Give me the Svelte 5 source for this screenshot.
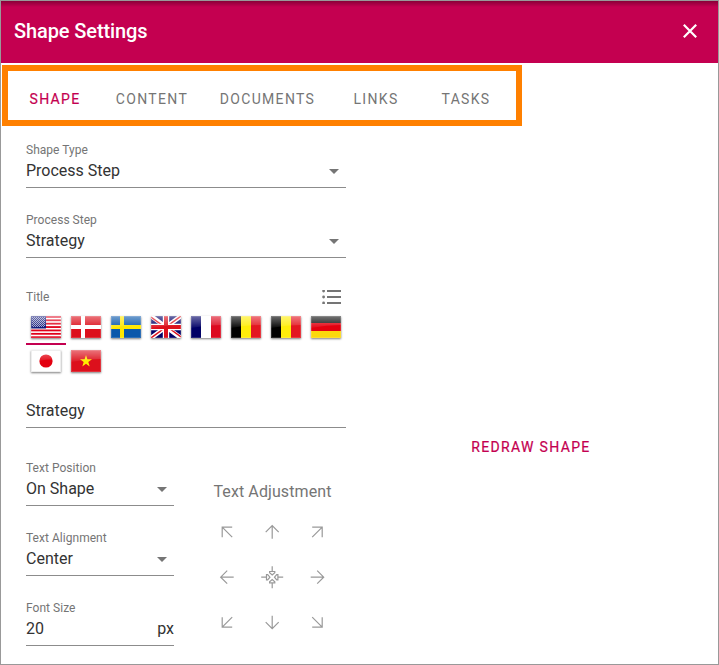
<script>
  const tabs = [
    { name: 'Shape', w: 90 },
    { name: 'Content', w: 104 },
    { name: 'Documents', w: 127 },
    { name: 'Links', w: 90 },
    { name: 'Tasks', w: 90 }
  ];
  let active = $state('Shape');

  const flags = ['us', 'dk', 'se', 'gb', 'fr', 'be', 'be', 'de', 'jp', 'vn'];
  let flag = $state(0);

  const diagonal = 'M17.5 27.5V17.5H27.5M17.5 17.5L27.5 27.5';
  const straight = 'M22.5 29V16M16 22.5L22.5 16L29 22.5';
  const arrows = [
    [diagonal, 0], [straight, 0], [diagonal, 90],
    [straight, 270], null, [straight, 90],
    [diagonal, 270], [straight, 180], [diagonal, 180]
  ];
  const stripes = [0, 1, 2, 3, 4, 5, 6].map((n) => (n * 44) / 13);
  const stars = [];
  for (let r = 0; r < 10; r++) for (let c = r % 2; c < 13; c += 2) stars.push([1 + c, 1 + r]);
</script>

{#snippet field(label, value, suffix)}
  <div class="field">
    <span class="label">{label}</span>
    <div class="value">
      <span>{value}</span>
      {#if suffix}
        <span>{suffix}</span>
      {:else}
        <svg class="caret" width="10" height="5" viewBox="0 0 10 5"><path d="M0 0H10L5 5Z" /></svg>
      {/if}
    </div>
  </div>
{/snippet}

{#snippet tricolor(a, b, c)}
  <path fill={a} d="M0 0H10V22H0Z" /><path fill={b} d="M10 0H20V22H10Z" /><path fill={c} d="M20 0H30V22H20Z" />
{/snippet}

<div class="dialog">
  <header>
    <h1>Shape Settings</h1>
    <svg width="14" height="14" viewBox="0 0 14 14"><path d="M.8 .8L13.2 13.2M13.2 .8L.8 13.2" stroke="#fff" stroke-width="2.2" /></svg>
  </header>

  <nav>
    {#each tabs as t}
      <button class:active={active === t.name} style:width="{t.w}px" onclick={() => (active = t.name)}>{t.name}</button>
    {/each}
  </nav>

  <main>
    <section class="form">
      {@render field('Shape Type', 'Process Step')}
      {@render field('Process Step', 'Strategy')}

      <div class="title-row">
        <span class="label">Title</span>
        <svg width="19" height="14" viewBox="0 0 19 14" fill="#757575">
          <path d="M5 0H19V2H5ZM5 6H19V8H5ZM5 12H19V14H5Z" />
          <circle cx="1.6" cy="1" r="1.4" /><circle cx="1.6" cy="7" r="1.4" /><circle cx="1.6" cy="13" r="1.4" />
        </svg>
      </div>

      <div class="flags">
        {#each flags as f, i}
          <button class="tile" class:selected={flag === i} aria-label={f} onclick={() => (flag = i)}>
            <svg class="flag" width="30" height="22" viewBox="0 0 30 22">
              {#if f === 'us'}
                <path fill="#fff" d="M0 0H30V22H0Z" />
                {#each stripes as y}
                  <rect x="0" {y} width="30" height="1.8" fill="#e0001a" />
                {/each}
                <path fill="#10187a" d="M0 0H15V12.5H0Z" />
                {#each stars as [x, y]}
                  <rect {x} {y} width="1" height="1" fill="#fff" opacity=".6" />
                {/each}
              {:else if f === 'dk'}
                <path fill="#dc101c" d="M0 0H30V22H0Z" />
                <path stroke="#fff" stroke-width="4" d="M12 0V22M0 11H30" />
              {:else if f === 'se'}
                <path fill="#0a58ab" d="M0 0H30V22H0Z" />
                <path stroke="#ffe800" stroke-width="4" d="M11 0V22M0 11H30" />
              {:else if f === 'gb'}
                <path fill="#000066" d="M0 0H30V22H0Z" />
                <path stroke="#fff" stroke-width="4.4" d="M0 0L30 22M30 0L0 22" />
                <path stroke="#dc101c" stroke-width="1.5" d="M0 1L15 12M30 21L15 10M30 0L15 11M0 22L15 11" />
                <path stroke="#fff" stroke-width="6.4" d="M15 0V22M0 11H30" />
                <path stroke="#dc101c" stroke-width="4" d="M15 0V22M0 11H30" />
              {:else if f === 'fr'}
                {@render tricolor('#000066', '#fff', '#dc0a20')}
              {:else if f === 'be'}
                {@render tricolor('#000', '#ffed0a', '#e31620')}
              {:else if f === 'de'}
                <path fill="#111" d="M0 0H30V7H0Z" /><path fill="#e3000f" d="M0 7H30V15H0Z" /><path fill="#fbd80c" d="M0 15H30V22H0Z" />
              {:else if f === 'jp'}
                <path fill="#fff" d="M0 0H30V22H0Z" /><circle cx="15" cy="11" r="6.6" fill="#e3000f" />
              {:else}
                <path fill="#dc101c" d="M0 0H30V22H0Z" />
                <path fill="#fff000" d="M15 5L16.4 9.3H21L17.3 12L18.7 16.4L15 13.7L11.3 16.4L12.7 12L9 9.3H13.6Z" />
              {/if}
              <defs>
                <linearGradient id="gloss{i}" x1="0" y1="0" x2="0" y2="1">
                  <stop offset="0" stop-color="#fff" stop-opacity=".42" />
                  <stop offset="1" stop-color="#fff" stop-opacity=".04" />
                </linearGradient>
              </defs>
              <path fill="url(#gloss{i})" d="M0 0H30V9Q15 9 0 12Z" />
              <rect x=".5" y=".5" width="29" height="21" fill="none" stroke={f === 'jp' ? '#eee' : '#fff'} stroke-opacity={f === 'jp' ? 1 : 0.15} />
            </svg>
          </button>
        {/each}
      </div>

      <div class="input">Strategy</div>

      <div class="split">
        <div class="narrow">
          {@render field('Text Position', 'On Shape')}
          {@render field('Text Alignment', 'Center')}
          {@render field('Font Size', '20', 'px')}
        </div>
        <div class="adjust">
          <div class="adjust-title">Text Adjustment</div>
          <div class="grid">
            {#each arrows as a}
              <svg width="45" height="45" viewBox="0.3 0.3 45 45" fill="none" stroke="#999" stroke-width="1.2">
                {#if a}
                  <path d={a[0]} transform="rotate({a[1]} 22.5 22.5)" />
                {:else}
                  {#each [0, 90, 180, 270] as r}
                    <path d="M22.5 11.5V17M19.9 16.8H25.1V18L22.5 20.2L19.9 18Z" transform="rotate({r} 22.5 22.5)" />
                  {/each}
                {/if}
              </svg>
            {/each}
          </div>
        </div>
      </div>
    </section>

    <section class="preview">
      <button class="redraw">Redraw Shape</button>
    </section>
  </main>
</div>

<style>
  :global(body) { margin: 0; }
  .dialog {
    box-sizing: border-box;
    width: 719px;
    height: 665px;
    border: 1px solid #999;
    background: #fff;
    font-family: Roboto, sans-serif;
    color: #333;
    overflow: hidden;
  }
  header {
    box-sizing: border-box;
    height: 62px;
    padding: 0 21px 2px 13px;
    display: flex;
    align-items: center;
    justify-content: space-between;
    color: #fff;
    background: linear-gradient(rgba(0, 0, 0, 0.3), rgba(0, 0, 0, 0) 6px), #c40050;
  }
  h1 { margin: 0; font-size: 20px; font-weight: 500; line-height: 28px; letter-spacing: -0.1px; }
  button {
    border: 0;
    padding: 0;
    background: none;
    font: 400 14px/20px Roboto, sans-serif;
    letter-spacing: 1.33px;
    text-transform: uppercase;
    color: #757575;
  }
  nav {
    box-sizing: border-box;
    display: flex;
    width: 520px;
    height: 61px;
    margin: 2px 0 0 1px;
    border: 6px solid #ff8000;
    padding: 7px 0 0 2px;
  }
  button.active, .redraw { color: #c40050; }
  .active, .redraw { -webkit-text-stroke: 0.2px #c40050; }
  main { display: flex; }
  .form { width: 320px; padding: 16px 0 0 25px; }
  .field {
    box-sizing: border-box;
    height: 46px;
    margin-bottom: 24px;
    border-bottom: 1px solid #8c8c8c;
  }
  .label { display: block; font-size: 12px; line-height: 16px; color: #757575; letter-spacing: 0.03px; }
  .value {
    display: flex;
    justify-content: space-between;
    align-items: center;
    height: 26px;
    font-size: 16px;
  }
  .value span { padding-bottom: 2px; }
  .caret { margin-right: 7px; fill: #757575; }
  .title-row {
    display: flex;
    justify-content: space-between;
    align-items: center;
    height: 24px;
    margin-top: 27px;
    padding-right: 5px;
  }
  .flags { display: flex; flex-wrap: wrap; margin-top: 2px; }
  .tile {
    box-sizing: border-box;
    width: 40px;
    height: 34px;
    display: flex;
    justify-content: center;
    padding-top: 5px;
    border-bottom: 2px solid transparent;
  }
  .tile.selected { border-color: #c40050; }
  .flag { box-shadow: 0 1px 2px rgba(0, 0, 0, 0.5); }
  .input {
    box-sizing: border-box;
    height: 30px;
    margin-top: 19px;
    border-bottom: 1px solid #8c8c8c;
    font-size: 16px;
    line-height: 26px;
  }
  .split { display: flex; margin-top: 32px; }
  .narrow { width: 148px; }
  .adjust { margin: 20px 0 0 31px; width: 135px; }
  .adjust-title {
    text-align: center;
    white-space: nowrap;
    font-size: 16px;
    line-height: 24px;
    letter-spacing: 0.1px;
    color: #757575;
  }
  .grid { display: grid; grid-template-columns: repeat(3, 45px); margin-top: 6px; }
  .grid svg { display: block; }
  .preview { flex: 1; display: flex; justify-content: center; padding: 311px 2px 0 0; }
  .redraw { height: 20px; white-space: nowrap; }
</style>
